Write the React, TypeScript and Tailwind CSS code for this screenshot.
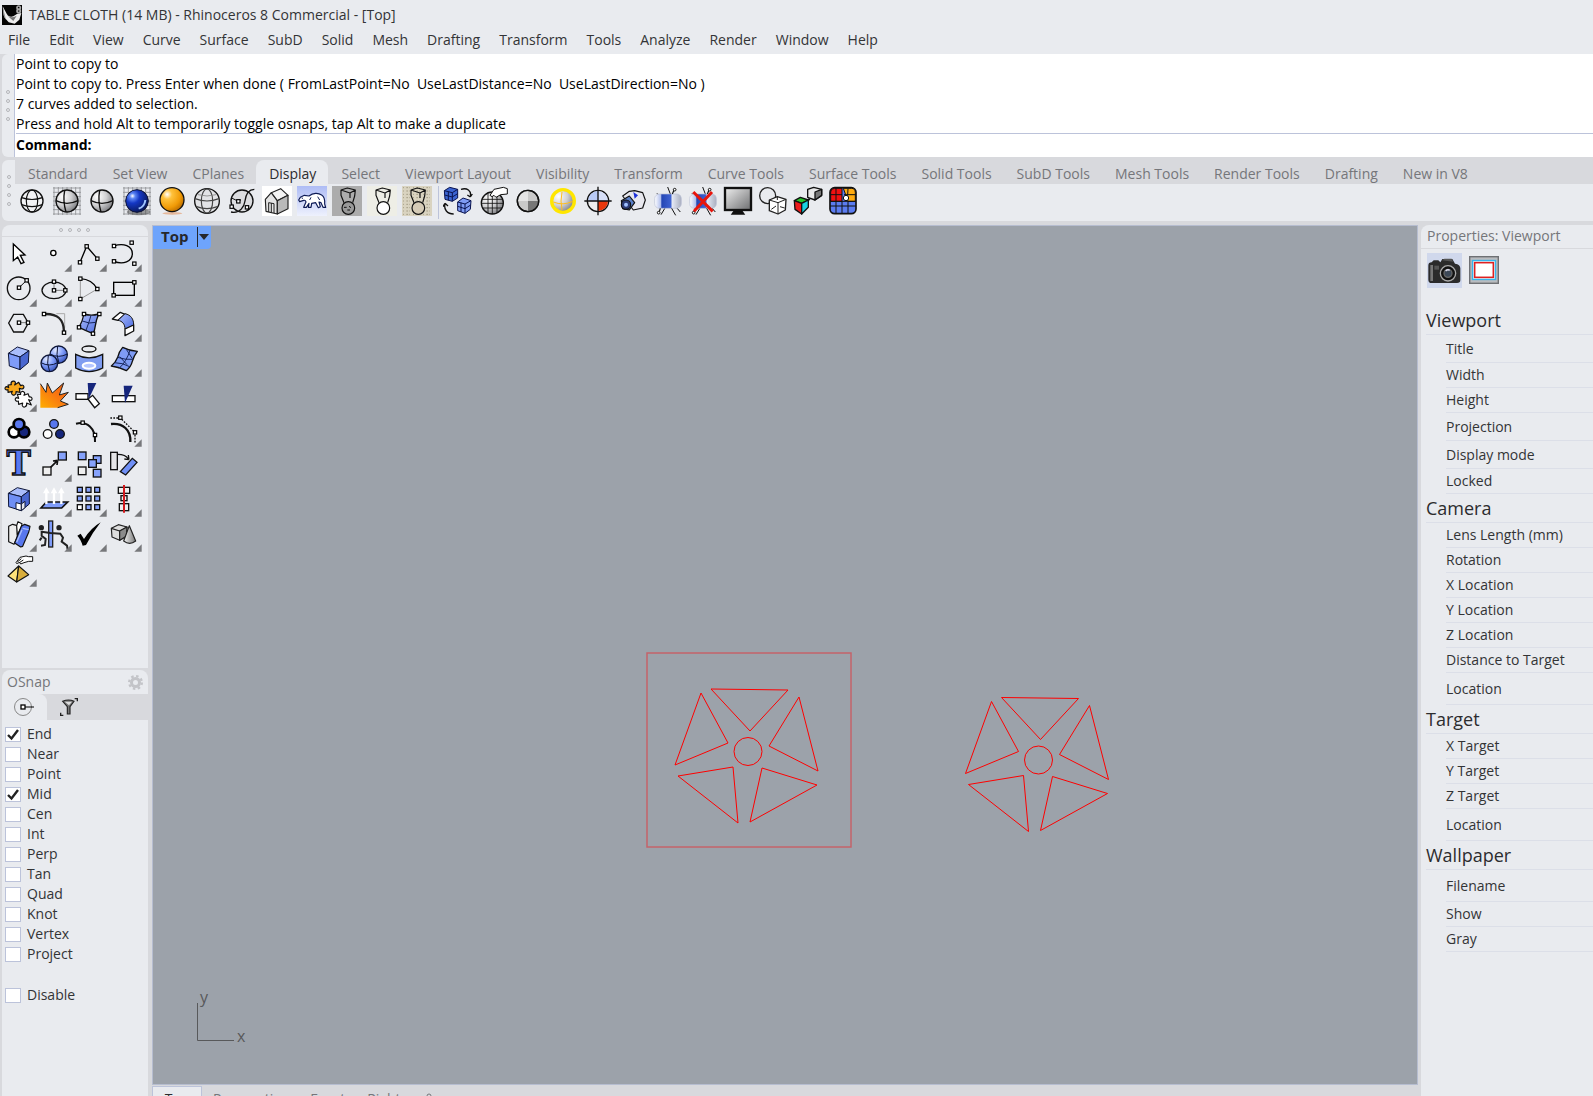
import React from 'react';

const menus = ['File', 'Edit', 'View', 'Curve', 'Surface', 'SubD', 'Solid', 'Mesh', 'Drafting', 'Transform', 'Tools', 'Analyze', 'Render', 'Window', 'Help'];

const history = [
  'Point to copy to',
  'Point to copy to. Press Enter when done ( FromLastPoint=No  UseLastDistance=No  UseLastDirection=No )',
  '7 curves added to selection.',
  'Press and hold Alt to temporarily toggle osnaps, tap Alt to make a duplicate',
];

const toolbarTabs = ['Standard', 'Set View', 'CPlanes', 'Display', 'Select', 'Viewport Layout', 'Visibility', 'Transform', 'Curve Tools', 'Surface Tools', 'Solid Tools', 'SubD Tools', 'Mesh Tools', 'Render Tools', 'Drafting', 'New in V8'];

const snaps = ['End', 'Near', 'Point', 'Mid', 'Cen', 'Int', 'Perp', 'Tan', 'Quad', 'Knot', 'Vertex', 'Project'];

const sections = [
  { title: 'Viewport', rows: [['Title', 'h-7'], ['Width', 'h-[25px]'], ['Height', 'h-[25px]'], ['Projection', 'h-7'], ['Display mode', 'h-7'], ['Locked', 'h-[25px]']] },
  { title: 'Camera', rows: [['Lens Length (mm)', 'h-[25px]'], ['Rotation', 'h-[25px]'], ['X Location', 'h-[25px]'], ['Y Location', 'h-[25px]'], ['Z Location', 'h-[25px]'], ['Distance to Target', 'h-[25px]'], ['Location', 'h-8']] },
  { title: 'Target', rows: [['X Target', 'h-[25px]'], ['Y Target', 'h-[25px]'], ['Z Target', 'h-[25px]'], ['Location', 'h-8']] },
  { title: 'Wallpaper', rows: [['Filename', 'h-8'], ['Show', 'h-[25px]'], ['Gray', 'h-[25px]']] },
];

// Small square control point used by the curve icons
const H = ({ x, y }: { x: number; y: number }) => <rect x={x - 5} y={y - 5} width="10" height="10" fill="#fff" stroke="#000" strokeWidth="3.5" />;

const GridBack = () => (
  <path d="M3 6H87M3 19H87M3 32H87M3 45H87M3 58H87M3 71H87M3 84H87M6 3V87M19 3V87M32 3V87M45 3V87M58 3V87M71 3V87M84 3V87" stroke="#8f9094" strokeWidth="2.5" fill="none" />
);

const Capsule = ({ ball }: { ball: string }) => (
  <g fill="none" stroke="#111" strokeWidth="3.5" strokeLinejoin="round">
    <path d="M27 12L46 6L70 12L54 21L27 12V28L36 50M70 12L68 30L62 50M54 21V36" />
    <circle cx="49" cy="66" r="19" fill={ball} />
  </g>
);

const Spot = () => (
  <g stroke="#111" fill="none">
    <path d="M44 3L52 24M36 66L24 86M12 22L20 30M70 64L82 78" strokeWidth="3" />
    <rect x="5" y="24" width="80" height="43" rx="14" fill="url(#lamp)" stroke="#b9c0d4" strokeWidth="2" />
    <path d="M58 24L64 10M22 67L18 80" strokeWidth="3.5" />
    <circle cx="65" cy="11" r="4" fill="#fff" strokeWidth="3" />
    <circle cx="17" cy="80" r="4" fill="#fff" strokeWidth="3" />
    <path d="M56 67L68 88" strokeWidth="3" />
  </g>
);

const displayIcons: [string, React.ReactNode][] = [
  ['Wireframe', <g fill="#f2f3f5" stroke="#111" strokeWidth="4"><circle cx="45" cy="45" r="33" /><g fill="none" strokeWidth="3.5"><ellipse cx="45" cy="45" rx="17" ry="33" /><path d="M14 35Q45 46 76 35M14 56Q45 68 76 56" /></g></g>],
  ['Shaded', <g><GridBack /><g stroke="#111" strokeWidth="4" fill="none"><circle cx="45" cy="45" r="33" fill="url(#grayBall)" /><path d="M12 44Q45 60 78 44M38 13Q32 45 42 78" /></g></g>],
  ['Shaded viewport', <g stroke="#111" strokeWidth="4" fill="none"><circle cx="45" cy="45" r="33" fill="url(#grayBall)" /><path d="M12 44Q45 60 78 44M38 13Q32 45 42 78" /></g>],
  ['Rendered', <g><GridBack /><ellipse cx="50" cy="78" rx="36" ry="10" fill="#444" opacity=".5" /><circle cx="45" cy="45" r="34" fill="url(#blueBall)" stroke="#0a1030" strokeWidth="3" /><path d="M70 42Q68 62 50 68" stroke="#9fc4ff" strokeWidth="6" fill="none" /></g>],
  ['Raytraced', <g><ellipse cx="46" cy="82" rx="30" ry="4" fill="#e5b79a" /><circle cx="45" cy="41" r="36" fill="url(#goldBall)" stroke="#111" strokeWidth="4" /></g>],
  ['Ghosted', <g fill="none" stroke="#111" strokeWidth="4"><circle cx="45" cy="45" r="37" fill="#e2e3e6" /><ellipse cx="45" cy="45" rx="17" ry="36" stroke="#444" strokeWidth="3.5" /><path d="M9 38Q45 52 81 38M14 62Q45 74 76 62" stroke="#444" strokeWidth="3.5" /><path d="M18 26Q45 34 72 26" stroke="#888" strokeWidth="2.5" /></g>],
  ['Technical', <g fill="none" stroke="#111" strokeWidth="4"><circle cx="45" cy="45" r="33" fill="#dcdde0" /><path d="M82 10C60 10 56 30 54 45S40 84 12 78" /><path d="M14 36Q30 48 42 42" strokeWidth="3" /><H x={34} y={46} /><H x={14} y={62} /><H x={60} y={64} /></g>],
  ['Artistic', <g><rect width="90" height="90" fill="#fff" /><g stroke="#222" strokeWidth="3.5" strokeLinejoin="round"><path d="M10 40L28 20L46 44V84L12 76Z" fill="#e4e4e4" /><path d="M28 20L56 8L78 28L46 44Z" fill="#f4f4f4" /><path d="M46 44L78 28V68L46 84Z" fill="#b9b9b9" /><path d="M20 78V50L36 53V81M28 51V79" fill="none" strokeWidth="3" /></g></g>],
  ['Arctic', <g><rect width="90" height="90" fill="url(#arctic)" /><path d="M5 42L10 34L22 28L36 30C48 20 64 20 74 27C82 32 84 40 83 54L86 64H78L72 50L66 48L70 62L64 65L56 50L44 52L42 64H34L36 52L28 64H20L27 48C26 44 24 42 20 43L8 47Z" fill="#fff" stroke="#0d1a55" strokeWidth="3.5" strokeLinejoin="round" /><path d="M38 42L42 34M62 32L68 42M14 36L18 37" stroke="#0d1a55" strokeWidth="3" /></g>],
  ['X-Ray', <g><rect width="90" height="90" fill="#acacac" /><Capsule ball="#999" /><path d="M36 64H44M52 60L56 66M46 72H54" stroke="#111" strokeWidth="3" /></g>],
  ['Pen', <g><rect width="90" height="90" fill="#eeeee6" /><Capsule ball="#fff" /></g>],
  ['Monochrome', <g><rect width="90" height="90" fill="#d9d3c0" /><path d="M3 5H88M3 15H88M3 25H88M3 35H88M3 45H88M3 55H88M3 65H88M3 75H88M3 85H88" stroke="#a79f88" strokeWidth="3" strokeDasharray="3 7 5 4 2 9" /><Capsule ball="#d5cbb6" /></g>],
];

const viewIcons: [string, React.ReactNode][] = [
  ['Set object display mode', <g stroke="#0a1450" strokeWidth="3" strokeLinejoin="round"><path d="M4 14L20 4L44 10V36L28 46L6 40Z" fill="#3a63d0" /><path d="M4 14L28 20L44 10M28 20V46M16 17V43M5 27L28 33L44 23" fill="none" /><path d="M44 48L60 36L84 44L82 70L66 82L44 74Z" fill="#7f9cf4" /><path d="M44 48L66 54L84 44M66 54V82M54 50V78M44 61L66 68L83 57" fill="none" /><path d="M54 10C72 4 86 14 82 32M82 33L73 27M82 33L88 24M32 84C12 84 2 70 6 54M6 52L0 62M6 52L15 60" fill="none" stroke="#111" strokeWidth="4" /></g>],
  ['Mesh settings', <g stroke="#111" strokeWidth="4" fill="none"><circle cx="43" cy="51" r="33" fill="url(#grayBall)" /><path d="M12 40H74M10 52H76M14 66H72M30 20V82M43 18V84M57 22V80" strokeWidth="2.5" /><path d="M36 28L48 10L76 4L88 8V24L68 26L54 34L48 28L42 32Z" fill="#fff" strokeWidth="3" /></g>],
  ['Flat shade', <g stroke="#111" strokeWidth="4"><circle cx="45" cy="45" r="32" fill="#c9c9c9" /><path d="M45 45V13A32 32 0 0 0 13 45Z" fill="#e4e4e4" stroke="none" /><path d="M45 45H77A32 32 0 0 1 45 77Z" fill="#777" stroke="none" /><circle cx="45" cy="45" r="32" fill="none" /></g>],
  ['Highlight', <g><circle cx="45" cy="45" r="34" fill="url(#grayBall)" stroke="#ffe600" strokeWidth="10" /><path d="M16 48Q45 60 74 46M42 18Q36 45 42 72" fill="none" stroke="#ffbe20" strokeWidth="3" /></g>],
  ['Rotate view', <g stroke="#111"><circle cx="45" cy="45" r="32" fill="#eee" strokeWidth="4" /><path d="M45 45V15A30 30 0 0 0 15 45Z" fill="#b9cbf7" stroke="none" /><path d="M45 15A30 30 0 0 1 75 45H45Z" fill="#d6dff8" stroke="none" /><path d="M45 45H75A30 30 0 0 1 45 75Z" fill="#e8380c" stroke="none" /><path d="M45 2V88M4 45H86" strokeWidth="4" /></g>],
  ['Capture', <g stroke="#111" strokeWidth="3.5" strokeLinejoin="round"><path d="M14 30L34 16L50 14L74 20L82 42L74 66L46 72Z" fill="#e8e8ee" /><path d="M46 18L60 28L50 38Z" fill="#1c2fd8" stroke="none" /><path d="M10 44L34 30L50 50L34 72L14 68Z" fill="#5a7fc8" /><circle cx="24" cy="56" r="14" fill="#2b3b74" /><circle cx="24" cy="56" r="6" fill="#9fc0ff" stroke="none" /></g>],
  ['Spotlight on', <Spot />],
  ['Spotlight off', <g><Spot /><path d="M16 18L74 76M72 18L18 76" stroke="#e8150c" strokeWidth="9" /></g>],
  ['Full screen', <g stroke="#111" strokeWidth="5"><path d="M35 74H55L62 84H28Z" fill="#111" /><rect x="6" y="6" width="78" height="66" fill="url(#screen)" strokeWidth="7" /></g>],
  ['Clip boundary', <g fill="none" stroke="#222" strokeWidth="4" strokeLinejoin="round"><circle cx="29" cy="29" r="24" /><path d="M34 42L58 32L84 40L82 72L60 84L34 74Z" fill="#fff" /><path d="M34 42L60 50L84 40M60 50V84M40 70L54 60M66 62L80 66M58 32V42" strokeWidth="3" /></g>],
  ['Display links', <g stroke="#111" strokeWidth="4" strokeLinejoin="round"><path d="M44 10L62 4L86 10V28L66 42L44 34Z" fill="#e9e9e9" /><path d="M66 18L86 10V28L66 42Z" fill="#777" /><path d="M50 38L34 56" strokeWidth="6" /><path d="M4 44L22 34L46 42L26 52Z" fill="#26c32b" /><path d="M4 44L26 52V84L6 70Z" fill="#ec1c1c" /><path d="M26 52L46 42V64L26 84Z" fill="#18d1e2" /></g>],
  ['Texture mapping', <g stroke="#111"><rect x="6" y="5" width="78" height="78" rx="14" fill="#5b7cf0" strokeWidth="5" /><path d="M8 46V18Q8 7 20 7H42V46Z" fill="#f01010" strokeWidth="3" /><path d="M46 7H70Q82 7 82 20V46H60Z" fill="#ffab10" strokeWidth="3" /><path d="M6 46H84M6 60H84M24 46V84M42 46V84M60 46V84M24 6V46M8 26H42M60 8L58 44M48 26H84" fill="none" strokeWidth="3" /><circle cx="54" cy="36" r="8" fill="#fff" strokeWidth="3" /></g>],
];

const tools: { name: string; more?: boolean; art: React.ReactNode }[] = [
  { name: 'Select', art: <path d="M34 21L69 54L55 55L66 76L57 80L47 60L34 71Z" fill="#fff" stroke="#000" strokeWidth="4" /> },
  { name: 'Point', more: true, art: <circle cx="49" cy="48" r="8" fill="#fff" stroke="#000" strokeWidth="4" /> },
  { name: 'Polyline', more: true, art: <g><path d="M24 76L44 28L76 65" fill="none" stroke="#000" strokeWidth="4" /><H x={24} y={76} /><H x={44} y={28} /><H x={76} y={65} /></g> },
  { name: 'Curve', more: true, art: <g><path d="M21 27C50 16 76 28 76 50C76 74 48 84 21 73" fill="none" stroke="#000" strokeWidth="4" /><H x={21} y={27} /><H x={74} y={17} /><H x={21} y={73} /><H x={82} y={80} /></g> },
  { name: 'Circle', more: true, art: <g><circle cx="50" cy="49" r="34" fill="none" stroke="#111" strokeWidth="4" /><path d="M51 47L74 25" stroke="#111" strokeWidth="3" /><H x={51} y={47} /><H x={74} y={25} /></g> },
  { name: 'Ellipse', more: true, art: <g><ellipse cx="51" cy="55" rx="36" ry="25" fill="none" stroke="#111" strokeWidth="4" /><path d="M51 30V55H85" fill="none" stroke="#777" strokeWidth="3" /><H x={51} y={29} /><H x={51} y={55} /><H x={85} y={55} /></g> },
  { name: 'Arc', more: true, art: <g><path d="M25 20V81L76 51" fill="none" stroke="#999" strokeWidth="3" /><path d="M25 20Q60 22 76 51" fill="none" stroke="#000" strokeWidth="4" /><H x={25} y={20} /><H x={76} y={51} /><H x={25} y={81} /></g> },
  { name: 'Rectangle', more: true, art: <g><rect x="20" y="31" width="62" height="39" fill="none" stroke="#000" strokeWidth="4" /><H x={20} y={70} /><H x={82} y={31} /></g> },
  { name: 'Polygon', more: true, art: <g><path d="M20 48L35 22H64L79 48L64 75H35Z" fill="none" stroke="#111" strokeWidth="4" /><path d="M51 47H78" stroke="#777" strokeWidth="3" /><H x={51} y={47} /><H x={78} y={47} /></g> },
  { name: 'Fillet', more: true, art: <g><path d="M58 20H83V62" fill="none" stroke="#aaa" strokeWidth="3" /><path d="M24 21C62 20 80 36 81 74" fill="none" stroke="#222" strokeWidth="7" /><H x={21} y={21} /><H x={81} y={77} /></g> },
  { name: 'Surface from points', more: true, art: <g><path d="M36 21Q58 28 80 21Q72 40 70 56Q68 72 63 80Q44 72 21 61Q32 42 36 21Z" fill="url(#bluePlane)" stroke="#111" strokeWidth="4" /><path d="M57 25Q52 44 42 70M31 42Q52 52 72 46" fill="none" stroke="#17265c" strokeWidth="3" /><H x={36} y={21} /><H x={82} y={21} /><H x={21} y={61} /><H x={63} y={80} /></g> },
  { name: 'Blend surface', more: true, art: <g stroke="#111" strokeWidth="4" strokeLinejoin="round"><path d="M16 36L40 16L54 22L33 40Z" fill="#fff" /><path d="M33 40L54 20C72 24 80 36 80 54L54 66C54 52 46 42 33 40Z" fill="url(#bluePlane)" strokeWidth="3" /><path d="M54 66L80 54V72L54 86Z" fill="#fff" /></g> },
  { name: 'Box', more: true, art: <g stroke="#0e1638" strokeWidth="3" strokeLinejoin="round"><path d="M19 34L46 15L81 26L54 45Z" fill="#a9bdfb" /><path d="M19 34L54 45V83L22 72Z" fill="#7f9cf9" /><path d="M54 45L81 26L79 62L54 83Z" fill="#4a67d0" /></g> },
  { name: 'Boolean union', more: true, art: <g stroke="#0e1638" strokeWidth="4" fill="none"><circle cx="65" cy="38" r="26" fill="url(#softBlue)" /><path d="M39 36Q65 50 91 36M62 12Q56 38 66 64" strokeWidth="3" /><circle cx="37" cy="64" r="25" fill="url(#softBlue)" /><path d="M12 62Q37 76 62 62M34 39Q28 64 38 89" strokeWidth="3" /></g> },
  { name: 'Project curves', more: true, art: <g stroke="#111" strokeWidth="4"><ellipse cx="51" cy="21" rx="21" ry="9" fill="none" /><path d="M11 37Q51 58 92 37V78Q51 100 11 78Z" fill="#7f9cf0" /><ellipse cx="51" cy="71" rx="19" ry="9" fill="#b5c6ff" stroke="#fff" strokeWidth="6" /></g> },
  { name: 'Rebuild surface', more: true, art: <g stroke="#111" strokeWidth="4" strokeLinejoin="round"><path d="M47 16Q66 26 91 28Q80 42 76 58Q72 74 58 86Q38 76 13 72Q26 62 32 46Q36 28 47 16Z" fill="#7f9cf4" /><path d="M69 25Q58 60 36 79M32 46Q54 54 78 52M22 62Q46 62 68 74M38 44L60 68M58 22L76 50" fill="none" stroke="#17265c" strokeWidth="3" /></g> },
  { name: 'Explode', more: true, art: <g stroke="#111" strokeWidth="3.5" strokeLinejoin="round"><path d="M18 24L28 23C24 14 36 8 40 16C41 20 38 22 38 24L50 16L56 26C66 20 70 34 60 36C56 36 55 34 52 34L54 46L42 44C44 54 32 58 29 50C28 46 30 45 31 43L18 46L18 38C8 42 6 30 14 29C17 29 18 31 20 32Z" fill="#f8a81c" /><path d="M46 52L56 52C53 43 66 40 68 48C69 52 66 53 66 55L78 50L82 60C92 58 92 70 86 70C83 70 82 68 80 68L88 84L74 78C76 90 64 94 61 86C60 82 62 80 62 78L50 82L49 72C40 76 36 64 44 62C47 62 47 64 50 64Z" fill="#fff" /></g> },
  { name: 'Extract', art: <g><path d="M10 20L27 46L31 18L46 48L80 18L67 54L94 46L70 72L94 82L62 92H10Z" fill="url(#fire)" /><path d="M10 20L27 46L31 18L46 48L80 18L67 54L94 46L70 72L94 82L62 92" fill="none" stroke="#222" strokeWidth="3" /></g> },
  { name: 'Trim', art: <g><rect x="12" y="50" width="36" height="17" fill="#fff" stroke="#111" strokeWidth="4" /><path d="M48 66L62 55L82 80L68 92Z" fill="#fff" stroke="#111" strokeWidth="4" /><path d="M47 18H73L50 66Z" fill="#16267c" /></g> },
  { name: 'Split', art: <g><rect x="16" y="56" width="68" height="18" fill="#fff" stroke="#111" strokeWidth="4" /><path d="M50 26H77L54 78Z" fill="#16267c" /></g> },
  { name: 'Group', more: true, art: <g stroke="#000" strokeWidth="8"><circle cx="36" cy="60" r="16" fill="#fff" /><circle cx="66" cy="60" r="16" fill="#16267c" /><circle cx="51" cy="37" r="16" fill="#5877ee" /></g> },
  { name: 'Ungroup', art: <g stroke="#111" strokeWidth="4"><circle cx="51" cy="36" r="13" fill="#5877ee" /><circle cx="32" cy="66" r="13" fill="#fff" /><circle cx="69" cy="66" r="13" fill="#16267c" /></g> },
  { name: 'Edit points', art: <g><path d="M12 35C44 26 72 48 69 90" fill="none" stroke="#111" strokeWidth="6" /><H x={32} y={32} /><H x={69} y={69} /></g> },
  { name: 'Control points', more: true, art: <g><path d="M12 36C48 32 72 54 70 90" fill="none" stroke="#111" strokeWidth="7" /><path d="M10 18H40L84 61V92" fill="none" stroke="#111" strokeWidth="4" strokeDasharray="5 4" /><H x={40} y={17} /><H x={84} y={61} /></g> },
  { name: 'Text', art: <text x="50" y="84" textAnchor="middle" fontSize="98" fontWeight="bold" fill="#5877ee" stroke="#111" strokeWidth="4" className="font-['DejaVu_Serif',serif]">T</text> },
  { name: 'Move', more: true, art: <g stroke="#111" strokeWidth="4"><path d="M40 62L62 40M62 40L48 42M62 40L60 54" fill="none" strokeWidth="5" /><rect x="18" y="60" width="24" height="24" fill="#eee" /><rect x="64" y="15" width="24" height="24" fill="#86a2fb" /></g> },
  { name: 'Copy', art: <g stroke="#111" strokeWidth="4" fill="#86a2fb"><rect x="19" y="15" width="23" height="23" /><rect x="64" y="26" width="23" height="23" /><rect x="50" y="38" width="23" height="23" /><rect x="64" y="67" width="23" height="23" /><rect x="19" y="60" width="23" height="23" fill="#eee" /></g> },
  { name: 'Rotate', art: <g stroke="#111" strokeWidth="4"><rect x="11" y="16" width="20" height="52" fill="#e4e4e6" /><path d="M40 74L76 34L90 46L56 84Z" fill="#6f8ff5" /><path d="M32 22Q56 22 64 36M66 38L64 24M66 38L52 36" fill="none" /></g> },
  { name: 'Boolean difference', more: true, art: <g stroke="#0e1638" strokeWidth="3" strokeLinejoin="round"><path d="M19 34L46 17L82 26L58 44Z" fill="#a9bdfb" /><path d="M19 34L58 44V86L20 74Z" fill="#6f8ff5" /><path d="M58 44L82 26V66L58 86Z" fill="#4a67d0" /><path d="M42 62L58 66V86L42 81Z" fill="#fff" /><path d="M58 66L69 58V77L58 86Z" fill="#e4e6ee" /></g> },
  { name: 'Extrude', more: true, art: <g><path d="M28 60H92L74 78H12Z" fill="#7f9cf9" stroke="#111" strokeWidth="5" /><path d="M28 66V26M51 66V26M73 66V26" stroke="#fff" strokeWidth="7" /><path d="M18 34L28 16L38 34ZM41 34L51 16L61 34ZM63 34L73 16L83 34Z" fill="#fff" /></g> },
  { name: 'Array', more: true, art: <g stroke="#111" strokeWidth="4" fill="#86a2fb"><rect x="16" y="16" width="15" height="15" /><rect x="42" y="16" width="15" height="15" /><rect x="68" y="16" width="15" height="15" /><rect x="16" y="42" width="15" height="15" /><rect x="42" y="42" width="15" height="15" /><rect x="68" y="42" width="15" height="15" /><rect x="16" y="68" width="15" height="15" fill="#fff" /><rect x="42" y="68" width="15" height="15" /><rect x="68" y="68" width="15" height="15" /></g> },
  { name: 'Align', more: true, art: <g stroke="#111" strokeWidth="4" fill="#eee"><rect x="34" y="16" width="34" height="18" /><rect x="42" y="41" width="18" height="15" /><rect x="37" y="65" width="28" height="21" /><path d="M51 9V92" stroke="#d2181c" strokeWidth="6" /></g> },
  { name: 'Flow', more: true, art: <g stroke="#111" strokeWidth="3.5" strokeLinejoin="round"><path d="M20 28L32 22L46 26V60L36 82L20 74Z" fill="#eee" /><path d="M44 26L48 14L60 20L58 30L46 54Z" fill="#fff" /><path d="M38 78L58 28L68 22L84 28L80 46L62 88L56 90Z" fill="#5877ee" /><path d="M62 34L80 38M60 38L44 76" fill="none" strokeWidth="4" stroke="#a9bdfb" /></g> },
  { name: 'Twist', more: true, art: <g stroke="#222" fill="none" strokeWidth="6"><rect x="35" y="12" width="12" height="78" fill="#7f9cf9" strokeWidth="4" /><circle cx="13" cy="32" r="5" fill="#222" /><circle cx="66" cy="32" r="5" fill="#222" /><path d="M14 42V56L26 66L24 84L12 86M14 44L40 48L70 50L78 62L74 74L90 86L92 98M14 62L8 70" /></g> },
  { name: 'Check', more: true, art: <path d="M16 56L26 50L36 66Q58 32 86 16Q62 46 42 84L32 86Q26 66 16 56Z" fill="#000" /> },
  { name: 'Mesh', more: true, art: <g stroke="#222" strokeWidth="3.5" strokeLinejoin="round"><path d="M13 34L34 23L60 30L58 58L38 70L15 60Z" fill="#ddd" /><path d="M13 34L38 42L60 30M38 42V70" fill="none" /><path d="M38 42L60 30L58 58L38 70Z" fill="#8b8b8b" /><path d="M67 26L50 72Q68 86 86 72Z" fill="url(#cone)" /></g> },
  { name: 'Pyramid', more: true, art: <g stroke="#111" strokeWidth="3.5" strokeLinejoin="round"><path d="M42 32L54 16L72 12L80 14H92V28H80L66 32L56 36L52 30L46 36Z" fill="#fff" strokeWidth="3" /><path d="M46 30L58 20M52 32L64 24" strokeWidth="3" /><path d="M50 42L18 72L44 90Z" fill="#ffe27a" /><path d="M50 42L80 68L44 90Z" fill="#d9ae3c" /></g> },
];

const triangles = [
  '558,463 635,464 597,505',
  '548,467 575,517 522,539',
  '646,471 616,520 665,545',
  '525,550 580,541 585,597',
  '609,542 664,559 597,596',
];

const Grip = ({ vertical }: { vertical?: boolean }) => (
  <div className={vertical ? 'flex flex-col gap-1' : 'flex gap-1'} aria-hidden="true">
    {[0, 1, 2, 3].map((n) => <span key={n} className={vertical ? 'size-1 rounded-full border border-[#b4b5b9] mb-px' : 'size-1 rounded-full border border-[#b4b5b9] mr-px'} />)}
  </div>
);

const Gradients = () => (
  <svg className="absolute size-0" aria-hidden="true">
    <defs>
      <radialGradient id="grayBall" cx=".3" cy=".3" r=".8"><stop offset="0" stopColor="#fff" /><stop offset=".5" stopColor="#d0d0d2" /><stop offset="1" stopColor="#77787c" /></radialGradient>
      <radialGradient id="blueBall" cx=".3" cy=".28" r=".8"><stop offset="0" stopColor="#fff" /><stop offset=".15" stopColor="#5d86f4" /><stop offset=".4" stopColor="#1437c4" /><stop offset="1" stopColor="#071550" /></radialGradient>
      <radialGradient id="goldBall" cx=".3" cy=".28" r=".8"><stop offset="0" stopColor="#fff" /><stop offset=".25" stopColor="#ffc23c" /><stop offset=".7" stopColor="#f09a06" /><stop offset="1" stopColor="#b76a00" /></radialGradient>
      <radialGradient id="softBlue" cx=".35" cy=".25" r=".8"><stop offset="0" stopColor="#e4ebff" /><stop offset=".5" stopColor="#7f9cf9" /><stop offset="1" stopColor="#3450b8" /></radialGradient>
      <linearGradient id="bluePlane" x1="0" y1="0" x2="1" y2="1"><stop offset="0" stopColor="#aebffc" /><stop offset="1" stopColor="#4b6be0" /></linearGradient>
      <linearGradient id="arctic" x1="0" y1="0" x2="0" y2="1"><stop offset="0" stopColor="#aebcf5" /><stop offset="1" stopColor="#eef1fd" /></linearGradient>
      <linearGradient id="screen" x1="0" y1="0" x2="1" y2="1"><stop offset="0" stopColor="#eee" /><stop offset="1" stopColor="#6d6e70" /></linearGradient>
      <linearGradient id="lamp" x1="0" y1="0" x2="1" y2="0"><stop offset="0" stopColor="#fff" /><stop offset=".22" stopColor="#b4c2ee" /><stop offset=".27" stopColor="#2446b4" /><stop offset=".6" stopColor="#3e62d2" /><stop offset=".66" stopColor="#e4e8f4" /><stop offset="1" stopColor="#a9afc0" /></linearGradient>
      <linearGradient id="fire" x1="0" y1="1" x2="1" y2="0"><stop offset="0" stopColor="#ffae00" /><stop offset=".5" stopColor="#f97a10" /><stop offset="1" stopColor="#f05a14" /></linearGradient>
      <linearGradient id="cone" x1="0" y1="0" x2="1" y2="0"><stop offset="0" stopColor="#f2f2f2" /><stop offset="1" stopColor="#777" /></linearGradient>
    </defs>
  </svg>
);

const IconStrip = ({ items }: { items: [string, React.ReactNode][] }) => (
  <div className="flex gap-[5px]">
    {items.map(([name, art]) => (
      <button key={name} aria-label={name} className="size-[30px]">
        <svg viewBox="0 0 90 90" className="size-[30px]">{art}</svg>
      </button>
    ))}
  </div>
);

const Snap = ({ name, on }: { name: string; on?: boolean }) => (
  <label className="flex h-5 items-center gap-[6px] pl-[3px]">
    <span className="relative flex">
      <input type="checkbox" defaultChecked={on} className="peer h-[15px] w-4 appearance-none border border-[#bcc3da] bg-white" />
      <svg viewBox="0 0 16 15" className="pointer-events-none absolute inset-0 hidden h-[15px] w-4 peer-checked:block"><path d="M3 8L6.5 11.5L13 3" fill="none" stroke="#222" strokeWidth="2.4" /></svg>
    </span>
    {name}
  </label>
);

const Header = () => (
  <header className="bg-[#e9ebef]">
    <div className="flex h-7 items-center gap-[7px] pt-px pl-[2px]">
      <svg viewBox="0 0 60 60" className="size-5"><rect width="60" height="60" fill="#050505" /><path d="M2 4L14 26Q20 38 34 34L46 26L58 24L52 44L38 56L20 52L8 38Z" fill="#eee" /><path d="M14 30Q26 42 44 32L34 48Z" fill="#777" /><path d="M2 4L4 30L12 44Z" fill="#999" /><g fill="none" stroke="#aaa" strokeWidth="5"><circle cx="50" cy="8" r="5" /><circle cx="50" cy="18" r="5" /></g></svg>
      <h1>TABLE CLOTH (14 MB) - Rhinoceros 8 Commercial - [Top]</h1>
    </div>
    <nav className="flex h-[26px] items-start gap-[19px] pt-[2px] pl-2">
      {menus.map((m) => <button key={m}>{m}</button>)}
    </nav>
  </header>
);

const CommandArea = () => (
  <section className="flex h-[103px] pl-[2px]">
    <div className="flex w-3 shrink-0 items-center justify-center rounded-l-md bg-[#e9ebef]"><Grip vertical /></div>
    <div className="flex flex-1 flex-col border-l border-[#bcc3da] bg-white pl-px text-black">
      <div className="border-b border-[#bcc3da]">
        {history.map((line) => <p key={line} className="h-5 text-sm leading-5 whitespace-pre last:h-[19px]">{line}</p>)}
      </div>
      <div className="flex h-[22px] items-center text-sm">
        <label htmlFor="command" className="font-bold">Command:</label>
        <input id="command" className="ml-1 flex-1 outline-none" />
      </div>
    </div>
  </section>
);

const Toolbar = () => (
  <section className="mt-[3px] flex h-[61px] pl-[2px]">
    <div className="flex w-[13px] shrink-0 items-center justify-center rounded-l-md bg-[#e9ebef]"><Grip vertical /></div>
    <div className="flex-1">
      <nav className="flex h-6 text-[#75767a]">
        {toolbarTabs.map((t) => (
          <button key={t} className={t === 'Display' ? 'rounded-t-lg bg-[#e9ebef] pt-1 pr-3 pl-[13px] text-[#2c2c2e]' : 'pt-1 pr-3 pl-[13px]'}>{t}</button>
        ))}
      </nav>
      <div className="flex h-[37px] bg-[#e9ebef] pt-[2px] pl-[2px]">
        <IconStrip items={displayIcons} />
        <div className="mr-1 ml-[6px] h-[33px] w-px bg-[#bcc3da]" />
        <IconStrip items={viewIcons} />
      </div>
    </div>
  </section>
);

const Sidebar = () => (
  <aside className="flex w-[150px] shrink-0 flex-col gap-[2px] pl-[2px]">
    <section className="h-[443px] w-[146px] rounded-t-lg bg-[#e9ebef]">
      <div className="flex h-3 items-start justify-center border-b border-[#d8d9dd] pt-[3px]"><Grip /></div>
      <div className="grid w-[140px] grid-cols-4">
        {tools.map((t) => (
          <button key={t.name} aria-label={t.name} className="size-[35px]">
            <svg viewBox="0 0 105 105" className="size-[35px]">
              {t.art}
              {t.more && <path d="M104 82V104H82Z" fill="#77787b" />}
            </svg>
          </button>
        ))}
      </div>
    </section>
    <section className="w-[146px] flex-1 rounded-t-lg bg-[#e9ebef]">
      <div className="flex h-6 items-center justify-between px-[5px] text-[#75767a]">
        <h2>OSnap</h2>
        <button aria-label="Options">
          <svg viewBox="0 0 15 15" className="size-[15px]" fill="none" stroke="#c3c4c8"><circle cx="7.5" cy="7.5" r="4" strokeWidth="3" /><circle cx="7.5" cy="7.5" r="6.4" strokeWidth="2.2" strokeDasharray="2.5 2.5" /></svg>
        </button>
      </div>
      <div className="flex h-[26px] bg-[#d8d9dd]">
        <button aria-label="Snaps" className="flex w-[45px] items-center justify-center rounded-tr-lg bg-[#e9ebef] pr-[2px]">
          <svg viewBox="0 0 20 20" className="size-5" fill="none"><circle cx="9" cy="10" r="8.5" stroke="#888" /><path d="M11 10H20" stroke="#000" /><rect x="7" y="8" width="4" height="4" fill="#fff" stroke="#000" strokeWidth="1.3" /></svg>
        </button>
        <button aria-label="Filters" className="flex w-11 items-center justify-center">
          <svg viewBox="0 0 54 54" className="size-[18px]"><path d="M8 10Q26 2 42 10L30 26V48H22V26Z" fill="#777" stroke="#222" strokeWidth="3.5" /><path d="M14 11H36L27 22Z" fill="#ddd" /><path d="M44 2H52V10M2 44V52H10" fill="none" stroke="#222" strokeWidth="4" /></svg>
        </button>
      </div>
      <div className="pt-1">
        {snaps.map((s) => <Snap key={s} name={s} on={s === 'End' || s === 'Mid'} />)}
        <div className="pt-[21px]"><Snap name="Disable" /></div>
      </div>
    </section>
  </aside>
);

const Viewport = () => (
  <main className="flex min-w-0 flex-1 flex-col pl-[2px]">
    <div className="relative flex-1 border border-[#b6bdd0] bg-[#9ca2aa]">
      <svg className="absolute inset-0 size-full" fill="none" stroke="#f00">
        <rect x="494" y="427" width="204" height="194" stroke="#c4636a" strokeWidth="1.5" />
        {[0, 1].map((n) => (
          <g key={n} transform={n ? 'translate(290.5 8.5)' : undefined}>
            {triangles.map((p) => <polygon key={p} points={p} />)}
            <circle cx="595" cy="525.5" r="14" />
          </g>
        ))}
      </svg>
      <svg viewBox="0 0 60 70" className="absolute bottom-9 left-10 h-[70px] w-[60px] font-['Open_Sans',sans-serif]" fill="none">
        <path d="M4.5 25V62.5H41" stroke="#58595b" />
        <text x="7" y="25" fontSize="16" fill="#58595b">y</text>
        <text x="44" y="64" fontSize="16" fill="#58595b">x</text>
      </svg>
      <button className="relative flex h-[23px] w-[58px] items-start rounded-br bg-[#6ea4fc] pl-2 text-[15px] font-bold text-[#26282c]">
        Top
        <svg viewBox="0 0 14 20" className="absolute top-px right-0 h-5 w-[14px]"><path d="M.5 0V20" stroke="#26282c" /><path d="M2 7H12L7 13Z" fill="#26282c" /></svg>
      </button>
    </div>
    <nav className="flex h-[11px] shrink-0 items-start overflow-hidden text-[#75767a]">
      <button className="mt-px h-[26px] w-[50px] shrink-0 border border-[#bcc3da] bg-[#e9ebef] text-[#2c2c2e]">Top</button>
      <div className="mt-px flex h-[26px] items-center gap-[22px] pl-[11px]">
        <button>Perspective</button>
        <button>Front</button>
        <button>Right</button>
        <button aria-label="New viewport">
          <svg viewBox="0 0 12 16" className="h-4 w-3" fill="none" stroke="#75767a"><circle cx="6" cy="5" r="2" /><path d="M6 8V14M3 11H9" /></svg>
        </button>
      </div>
    </nav>
  </main>
);

const Properties = () => (
  <aside className="ml-[3px] w-[172px] shrink-0 overflow-hidden rounded-tl-lg bg-[#e9ebef]">
    <h2 className="h-6 border-b border-[#d8d9dd] pl-[6px] leading-[22px] text-[#75767a]">Properties: Viewport</h2>
    <div className="flex h-[57px] items-start gap-[7px] pt-1 pl-[6px]">
      <button aria-label="Camera properties" className="size-[35px] bg-[#d0d8ec]">
        <svg viewBox="0 0 105 105" className="size-[35px]"><path d="M4 38Q4 28 14 28L20 22H34L40 28L46 18H76L84 32Q100 34 100 46V82Q100 90 90 90H14Q4 90 4 80Z" fill="#2b2b2b" /><path d="M46 22L52 17H74L78 26Z" fill="#555" /><path d="M10 36V84H18V36Z" fill="#777" /><path d="M22 38H36V50H22Z" fill="#555" /><circle cx="63" cy="61" r="23" fill="#111" stroke="#aaa" strokeWidth="4" /><circle cx="63" cy="61" r="12" fill="#3c4858" stroke="#666" strokeWidth="4" /><path d="M56 54Q62 48 68 52" stroke="#dde" strokeWidth="4" fill="none" /></svg>
      </button>
      <button aria-label="Viewport properties" className="pt-[3px]">
        <svg viewBox="0 0 30 28" className="h-7 w-[30px]"><rect x=".7" y=".7" width="28.6" height="26.6" fill="#b9bbbf" stroke="#6e7074" strokeWidth="1.4" /><rect x="3.5" y="4.5" width="23" height="19" fill="#dfe3e8" stroke="#36b4ec" strokeWidth="1.3" /><rect x="5.7" y="6.7" width="18.6" height="14.6" fill="#fff" stroke="#e02020" strokeWidth="1.5" /></svg>
      </button>
    </div>
    {sections.map((s) => (
      <section key={s.title} className="pl-[5px]">
        <h3 className="h-[29px] border-b border-[#dcdfe8] text-lg leading-[29px] text-[#2c2c2e]">{s.title}</h3>
        <ul className="pl-5">
          {s.rows.map(([label, height]) => <li key={label} className={`${height} flex items-center border-b border-[#dcdfe8]`}>{label}</li>)}
        </ul>
      </section>
    ))}
  </aside>
);

const App: React.FC = () => {
  return (
    <div className="flex h-screen flex-col overflow-hidden bg-[#d8d9dd] font-['Open_Sans',sans-serif] text-sm leading-5 text-[#333436]">
      <Gradients />
      <Header />
      <CommandArea />
      <Toolbar />
      <div className="mt-1 flex min-h-0 flex-1">
        <Sidebar />
        <Viewport />
        <Properties />
      </div>
    </div>
  );
};

export default App;
